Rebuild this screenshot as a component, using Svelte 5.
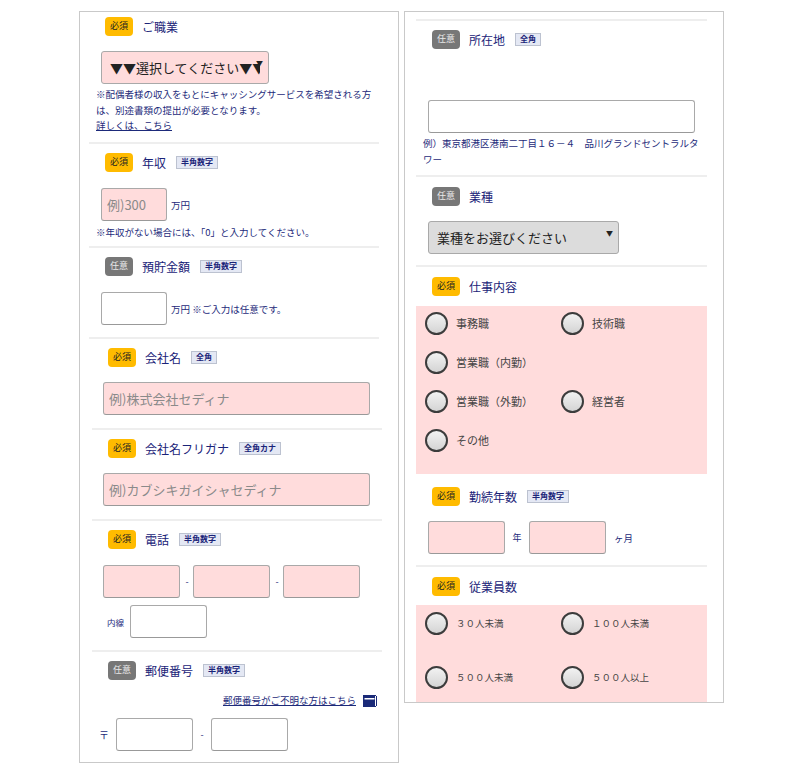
<script>
  const jobs = [
    ['事務職', '技術職'],
    ['営業職（内勤）', ''],
    ['営業職（外勤）', '経営者'],
    ['その他', '']
  ];
  const sizes = [
    ['３０人未満', '１００人未満'],
    ['５００人未満', '５００人以上']
  ];
</script>

<div class="page">
  <div class="panel left">
    <section class="s1">
      <div class="head"><span class="badge req">必須</span><span class="title">ご職業</span></div>
      <div class="selwrap pinksel">
        <select class="sel"><option>▼▼選択してください▼▼</option></select>
        <span class="arrow">▼</span>
      </div>
      <p class="note first">※配偶者様の収入をもとにキャッシングサービスを希望される方は、別途書類の提出が必要となります。</p>
      <a class="note link">詳しくは、こちら</a>
    </section>
    <section class="s2">
      <div class="head"><span class="badge req">必須</span><span class="title">年収</span><span class="tag">半角数字</span></div>
      <div class="row r-income">
        <input class="inp small pink" placeholder="例)300" />
        <span class="unit">万円</span>
      </div>
      <p class="note second">※年収がない場合には、「0」と入力してください。</p>
    </section>
    <section class="s3">
      <div class="head"><span class="badge opt">任意</span><span class="title">預貯金額</span><span class="tag">半角数字</span></div>
      <div class="row r-income">
        <input class="inp small" />
        <span class="unit">万円 ※ご入力は任意です。</span>
      </div>
    </section>
    <section class="s4 shift">
      <div class="head"><span class="badge req">必須</span><span class="title">会社名</span><span class="tag">全角</span></div>
      <input class="inp wide pink" placeholder="例)株式会社セディナ" />
    </section>
    <section class="s4 shift">
      <div class="head"><span class="badge req">必須</span><span class="title">会社名フリガナ</span><span class="tag">全角カナ</span></div>
      <input class="inp wide pink" placeholder="例)カブシキガイシャセディナ" />
    </section>
    <section class="s6 shift">
      <div class="head"><span class="badge req">必須</span><span class="title">電話</span><span class="tag">半角数字</span></div>
      <div class="row tel">
        <input class="inp mid pink" /><span class="dash">-</span>
        <input class="inp mid pink" /><span class="dash">-</span>
        <input class="inp mid pink" />
      </div>
      <div class="row ext">
        <span class="extlabel">内線</span>
        <input class="inp mid" />
      </div>
    </section>
    <section class="s7 shift">
      <div class="head"><span class="badge opt">任意</span><span class="title">郵便番号</span><span class="tag">半角数字</span></div>
      <div class="ziplink">
        <a class="note link">郵便番号がご不明な方はこちら</a>
        <svg width="14" height="12" viewBox="0 0 14 12" aria-hidden="true">
          <rect x="0" y="0" width="13" height="12" fill="#1a2a78" />
          <rect x="1.5" y="3" width="10" height="1.5" fill="#fff" />
          <rect x="12" y="1" width="2" height="10" fill="#fff" />
          <rect x="13" y="1" width="1" height="10" fill="#1a2a78" />
        </svg>
      </div>
      <div class="row zip">
        <span class="yubin">〒</span>
        <input class="inp mid" /><span class="zipdash">-</span>
        <input class="inp mid" />
      </div>
    </section>
  </div>

  <div class="panel right">
    <section class="r1">
      <div class="head"><span class="badge opt">任意</span><span class="title">所在地</span><span class="tag">全角</span></div>
      <input class="inp wide" />
      <p class="note addr">例）東京都港区港南二丁目１６－４　品川グランドセントラルタワー</p>
    </section>
    <section class="r2">
      <div class="head"><span class="badge opt">任意</span><span class="title">業種</span></div>
      <div class="selwrap graysel">
        <select class="sel"><option>業種をお選びください</option></select>
        <span class="arrow">▼</span>
      </div>
    </section>
    <section class="r3">
      <div class="head"><span class="badge req">必須</span><span class="title">仕事内容</span></div>
      <div class="radios jobs">
        {#each jobs as pair}
          {#each pair as label}
            <div class="radio">
              {#if label}<span class="dot"></span><span class="rlabel">{label}</span>{/if}
            </div>
          {/each}
        {/each}
      </div>
    </section>
    <section class="r4">
      <div class="head"><span class="badge req">必須</span><span class="title">勤続年数</span><span class="tag">半角数字</span></div>
      <div class="row years">
        <input class="inp mid pink" /><span class="y">年</span>
        <input class="inp mid pink" /><span class="m">ヶ月</span>
      </div>
    </section>
    <section class="r5">
      <div class="head"><span class="badge req">必須</span><span class="title">従業員数</span></div>
      <div class="radios sizes">
        {#each sizes as pair}
          {#each pair as label}
            <div class="radio"><span class="dot"></span><span class="rlabel spaced">{label}</span></div>
          {/each}
        {/each}
      </div>
    </section>
  </div>
</div>

<style>
  :global(body) {
    margin: 0;
    background: #fff;
    font-family: "Noto Sans CJK JP", "Noto Sans", sans-serif;
    color: #1d2a7a;
  }
  .page {
    display: flex;
    align-items: flex-start;
    gap: 5px;
    padding: 11px 0 0 79px;
    height: 763px;
    box-sizing: border-box;
    width: 800px;
  }
  .panel {
    width: 320px;
    box-sizing: border-box;
    border: 1px solid #c9c9c9;
    overflow: hidden;
  }
  .left { height: 752px; padding: 0 19px 0 9px; }
  .right { height: 692px; padding: 7px 16px 0 11px; }
  section { border-bottom: 2px solid #eeeeee; box-sizing: border-box; }
  .head { display: flex; align-items: center; height: 19px; padding-left: 16px; }
  .badge {
    width: 28px;
    height: 19px;
    border-radius: 4px;
    font-size: 9px;
    line-height: 18px;
    text-align: center;
    flex: none;
  }
  .req { background: #ffbb00; color: #222; }
  .opt { background: #777; color: #e8e8e8; }
  .title { font-size: 12px; margin-left: 9px; color: #1a2378; white-space: nowrap; }
  .tag {
    margin-left: 10px;
    height: 11px;
    line-height: 10px;
    padding: 0 4px;
    background: #e4e8f4;
    border: 1px solid #bcc2d0;
    font-size: 8px;
    font-weight: 700;
    color: #1a2378;
    white-space: nowrap;
  }
  .inp {
    display: block;
    box-sizing: border-box;
    height: 33px;
    background: #fff;
    border: 1px solid #a9a9a9;
    border-bottom-color: #999;
    border-radius: 3px;
    padding: 0 5px;
    margin: 0;
    font: 13px "Noto Sans CJK JP", sans-serif;
    outline: none;
  }
  .inp::placeholder { color: #8a8a8a; opacity: 1; }
  .pink { background: #ffdcdc; }
  .small { width: 66px; }
  .mid { width: 77px; }
  .wide { width: 267px; }
  .row { display: flex; align-items: center; }
  .unit { font-size: 9.5px; margin-left: 4px; color: #1d2a7a; }
  .note { font-size: 9.5px; line-height: 15.5px; color: #1d2a7a; margin: 0; }
  .link { display: block; text-decoration: underline; }

  .s1 { height: 132px; padding-top: 5px; margin-right: 0; }
  .selwrap { position: relative; height: 33px; margin-top: 15px; }
  .sel {
    appearance: none;
    display: block;
    box-sizing: border-box;
    width: 100%;
    height: 33px;
    border: 1px solid #a9a9a9;
    border-radius: 3px;
    font: 13px "Noto Sans CJK JP", sans-serif;
    color: #222;
    padding: 0 8px;
    outline: none;
  }
  .arrow {
    position: absolute;
    right: 6px;
    top: 7px;
    font-size: 7px;
    color: #222;
  }
  .pinksel { width: 168px; margin-left: 12px; }
  .pinksel .sel { background: #ffdcdc; }
  .graysel { width: 191px; margin-left: 12px; }
  .graysel .sel { background: #dcdcdc; }
  .note.first { margin: 3px 0 0 7px; width: 280px; }
  .s1 .link { margin-left: 7px; }

  .s2 { height: 104px; padding-top: 9px; }
  .r-income { margin: 16px 0 0 12px; }
  .note.second { margin: 4px 0 0 7px; }
  .s3 { height: 91px; padding-top: 9px; }

  .shift { margin: 0 -3px 0 3px; padding-top: 9px; }
  .shift .head { padding-left: 16px; }
  .shift .wide { margin: 15px 0 0 11px; }
  .s4 { height: 91px; }
  .s6 { height: 131px; }
  .tel { margin: 16px 0 0 11px; }
  .dash { width: 15px; text-align: center; font-size: 9px; margin-right: -1px; }
  .tel .dash { width: 14px; }
  .ext { margin: 7px 0 0 15px; }
  .extlabel { font-size: 8.5px; width: 23px; }
  .s7 { height: 112px; border-bottom: 0; }
  .ziplink {
    display: flex;
    align-items: center;
    justify-content: flex-end;
    gap: 7px;
    margin: 8px 5px 0 0;
    height: 20px;
    margin-top: 11px;
  }
  .zip { margin: 7px 0 0 8px; }
  .yubin { font-size: 10px; width: 17px; color: #1d2a7a; margin-left: -1px; }
  .zipdash { width: 18px; text-align: center; font-size: 9px; }

  .r1 { height: 158px; border-top: 2px solid #eeeeee; padding-top: 9px; }
  .right .wide { margin: 51px 0 0 12px; }
  .note.addr { margin: 3px 0 0 7px; }
  .r2 { height: 90px; padding-top: 10px; }
  .r3 { height: 209px; padding-top: 10px; border-bottom: 0; }
  .radios {
    background: #ffdcdc;
    display: grid;
    grid-template-columns: 136px 1fr;
    padding-left: 9px;
    box-sizing: border-box;
    width: 291px;
  }
  .jobs { height: 168px; margin-top: 10px; grid-auto-rows: 39px; padding-top: 5px; }
  .radio { display: flex; align-items: center; height: 24px; }
  .dot {
    width: 23px;
    height: 23px;
    box-sizing: border-box;
    border: 2px solid #3c3c3c;
    border-radius: 50%;
    background: linear-gradient(#f2f2f2, #d4d4d4);
    flex: none;
  }
  .rlabel { font-size: 11px; color: #444; margin-left: 8px; white-space: nowrap; }
  .spaced { font-size: 9.5px; letter-spacing: 0; }
  .r4 { height: 91px; padding-top: 11px; }
  .years { margin: 15px 0 0 12px; }
  .y { width: 24px; text-align: center; font-size: 9px; }
  .m { margin-left: 8px; font-size: 9.5px; }
  .r5 { height: 130px; padding-top: 10px; border-bottom: 0; }
  .sizes { height: 110px; margin-top: 9px; grid-auto-rows: 54px; padding-top: 6px; }
</style>
